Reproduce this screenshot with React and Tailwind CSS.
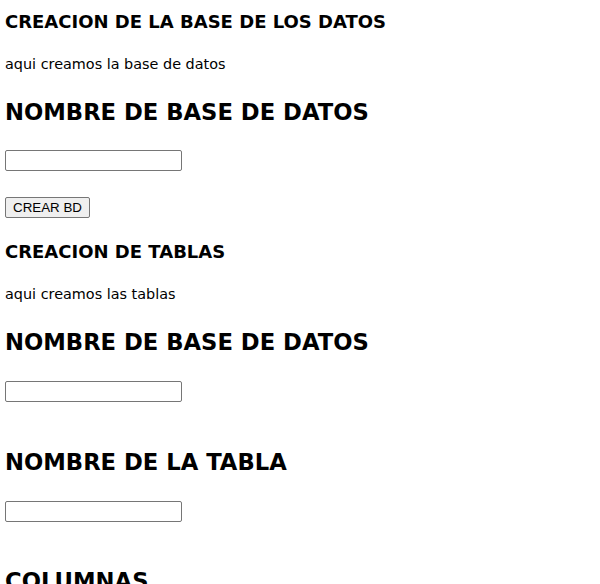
export default function App() {
  return (
    <div className="min-h-[584px] bg-white pl-[5px] text-black font-['Comic_Sans_MS','DejaVu_Sans',sans-serif]">
      <div className="flex flex-col items-start">
        <h3 className="mt-[12px] h-[20px] text-[18px] leading-[20px] font-bold whitespace-nowrap">
          CREACION DE LA BASE DE LOS DATOS
        </h3>
        <p className="mt-[23px] h-[18px] text-[14.4px] leading-[18px] whitespace-nowrap">aqui creamos la base de datos</p>
        <h2 className="mt-[25px] h-[28px] text-[22.7px] leading-[28px] font-bold whitespace-nowrap">
          NOMBRE DE BASE DE DATOS
        </h2>
        <input
          type="text"
          className="mt-[24px] h-[21px] w-[177px] rounded-[2px] border border-[#767676] bg-white px-[2px] text-[13.33px] outline-none"
        />
        <button
          type="button"
          className="mt-[26px] h-[21px] w-[85px] rounded-[2px] border border-[#767676] bg-[#efefef] text-[13.33px] leading-[19px] text-black font-['Liberation_Sans',Arial,sans-serif]"
        >
          CREAR BD
        </button>
        <h3 className="mt-[24px] h-[20px] text-[18px] leading-[20px] font-bold whitespace-nowrap">
          CREACION DE TABLAS
        </h3>
        <p className="mt-[23px] h-[18px] text-[14.4px] leading-[18px] whitespace-nowrap">aqui creamos las tablas</p>
        <h2 className="mt-[25px] h-[28px] text-[22.7px] leading-[28px] font-bold whitespace-nowrap">
          NOMBRE DE BASE DE DATOS
        </h2>
        <input
          type="text"
          className="mt-[25px] h-[21px] w-[177px] rounded-[2px] border border-[#767676] bg-white px-[2px] text-[13.33px] outline-none"
        />
        <h2 className="mt-[46px] h-[28px] text-[22.7px] leading-[28px] font-bold whitespace-nowrap">
          NOMBRE DE LA TABLA
        </h2>
        <input
          type="text"
          className="mt-[25px] h-[21px] w-[177px] rounded-[2px] border border-[#767676] bg-white px-[2px] text-[13.33px] outline-none"
        />
        <h2 className="mt-[45px] h-[28px] text-[22.7px] leading-[28px] font-bold whitespace-nowrap">
          COLUMNAS
        </h2>
      </div>
    </div>
  );
}
